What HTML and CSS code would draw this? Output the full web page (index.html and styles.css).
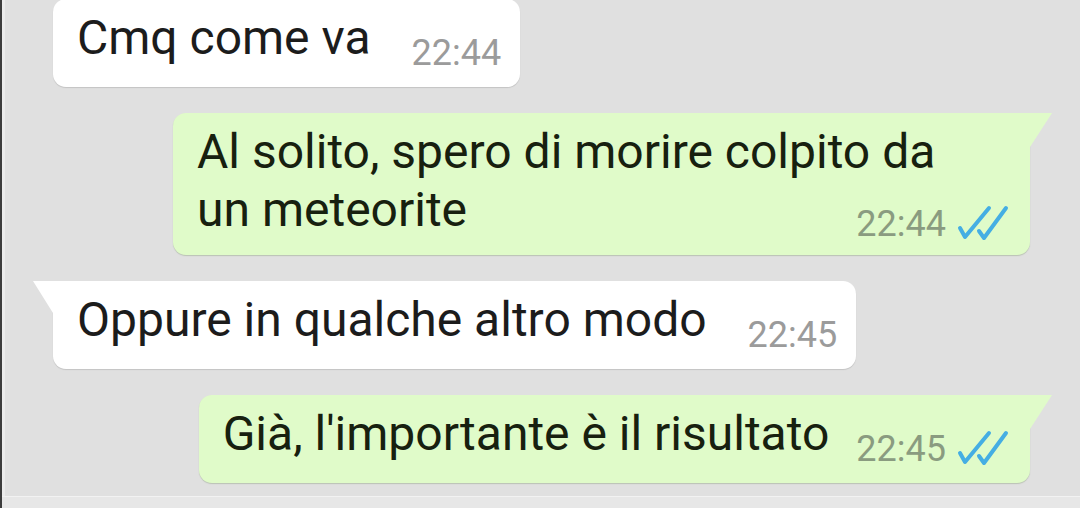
FILE: index.html
```html
<!DOCTYPE html>
<html lang="it">
<head>
<meta charset="utf-8">
<title>Chat</title>
<link rel="stylesheet" href="styles.css">
</head>
<body>
<div class="screen">
  <main class="chat">
    <div class="bubble bubble--in">
      <p class="bubble__text">Cmq come va</p>
      <div class="bubble__meta"><span class="bubble__time">22:44</span></div>
    </div>

    <div class="bubble bubble--out bubble--tail bubble--wrapped">
      <p class="bubble__text">Al solito, spero di morire colpito da un meteorite</p>
      <div class="bubble__meta">
        <span class="bubble__time">22:44</span>
        <svg class="bubble__ticks" viewBox="0 0 52 38" width="52" height="38" aria-hidden="true">
          <path d="M3 23 L8 32 L32 3" />
          <path d="M22 26 L27 33 L49 3" />
        </svg>
      </div>
    </div>

    <div class="bubble bubble--in bubble--tail">
      <p class="bubble__text">Oppure in qualche altro modo</p>
      <div class="bubble__meta"><span class="bubble__time">22:45</span></div>
    </div>

    <div class="bubble bubble--out bubble--tail">
      <p class="bubble__text">Già, l'importante è il risultato</p>
      <div class="bubble__meta">
        <span class="bubble__time">22:45</span>
        <svg class="bubble__ticks" viewBox="0 0 52 38" width="52" height="38" aria-hidden="true">
          <path d="M3 23 L8 32 L32 3" />
          <path d="M22 26 L27 33 L49 3" />
        </svg>
      </div>
    </div>
  </main>
  <footer class="composer"></footer>
</div>
</body>
</html>
```

FILE: styles.css
```css
html, body {
  margin: 0;
  padding: 0;
  height: 100%;
}

body {
  background: #e0e0e0;
  font-family: Roboto, "Noto Sans", "Liberation Sans", sans-serif;
  color: #1c1c1c;
  overflow: hidden;
}

.screen {
  height: 100vh;
  display: flex;
  flex-direction: column;
  border-left: 2px solid #3c3c3c;
  box-shadow: inset 3px 0 0 #ebebeb;
  box-sizing: border-box;
}

.chat {
  flex: 1;
  display: flex;
  flex-direction: column;
  gap: 26px;
  padding: 0 50px 0 51px;
  margin-top: -1px;
}

/* message bubble */
.bubble {
  position: relative;
  display: flex;
  align-items: flex-start;
  padding: 10px 19px 14px 24px;
  border-radius: 13px;
  box-shadow: 0 1px 1px rgba(0, 0, 0, 0.13);
  box-sizing: border-box;
}

.bubble--in {
  align-self: flex-start;
  background: #ffffff;
}

.bubble--out {
  align-self: flex-end;
  background: #e0fbc9;
  padding-right: 21px;
  box-shadow: 0 1px 1px rgba(90, 120, 70, 0.28);
}

.bubble__text {
  margin: 0;
  font-size: 48px;
  line-height: 58px;
  white-space: nowrap;
}

.bubble--out .bubble__text {
  color: #17200f;
}

.bubble__meta {
  flex-shrink: 0;
  display: flex;
  align-items: center;
  gap: 11px;
  height: 40px;
  margin-top: 24px;
  margin-left: 41px;
}

.bubble--out .bubble__meta {
  margin-left: 27px;
}

.bubble__time {
  font-size: 36px;
  line-height: 40px;
  color: #9b9b9b;
}

.bubble--out .bubble__time {
  color: #8a9b80;
}

.bubble__ticks {
  display: block;
  fill: none;
  stroke: #45aee3;
  stroke-width: 4;
  stroke-linecap: round;
  stroke-linejoin: round;
}

/* multi-line text: time sits on the last line */
.bubble--wrapped {
  width: 857px;
  flex-direction: column;
  align-items: stretch;
  padding-bottom: 11px;
}

.bubble--wrapped .bubble__text {
  max-width: 780px;
  white-space: normal;
}

.bubble--wrapped .bubble__meta {
  align-self: flex-end;
  margin-top: -35px;
}

/* tail on the first bubble of a group */
.bubble--tail.bubble--out {
  border-top-right-radius: 0;
}

.bubble--tail.bubble--out::after {
  content: "";
  position: absolute;
  top: 0;
  left: 100%;
  border-top: 34px solid #e0fbc9;
  border-right: 22px solid transparent;
}

.bubble--tail.bubble--in {
  border-top-left-radius: 0;
}

.bubble--tail.bubble--in::before {
  content: "";
  position: absolute;
  top: 0;
  right: 100%;
  border-top: 32px solid #ffffff;
  border-left: 20px solid transparent;
}

/* top edge of the input bar */
.composer {
  height: 11px;
  flex-shrink: 0;
  border-top: 1px solid #f2f2f2;
  background: #e7e7e7;
}
```
